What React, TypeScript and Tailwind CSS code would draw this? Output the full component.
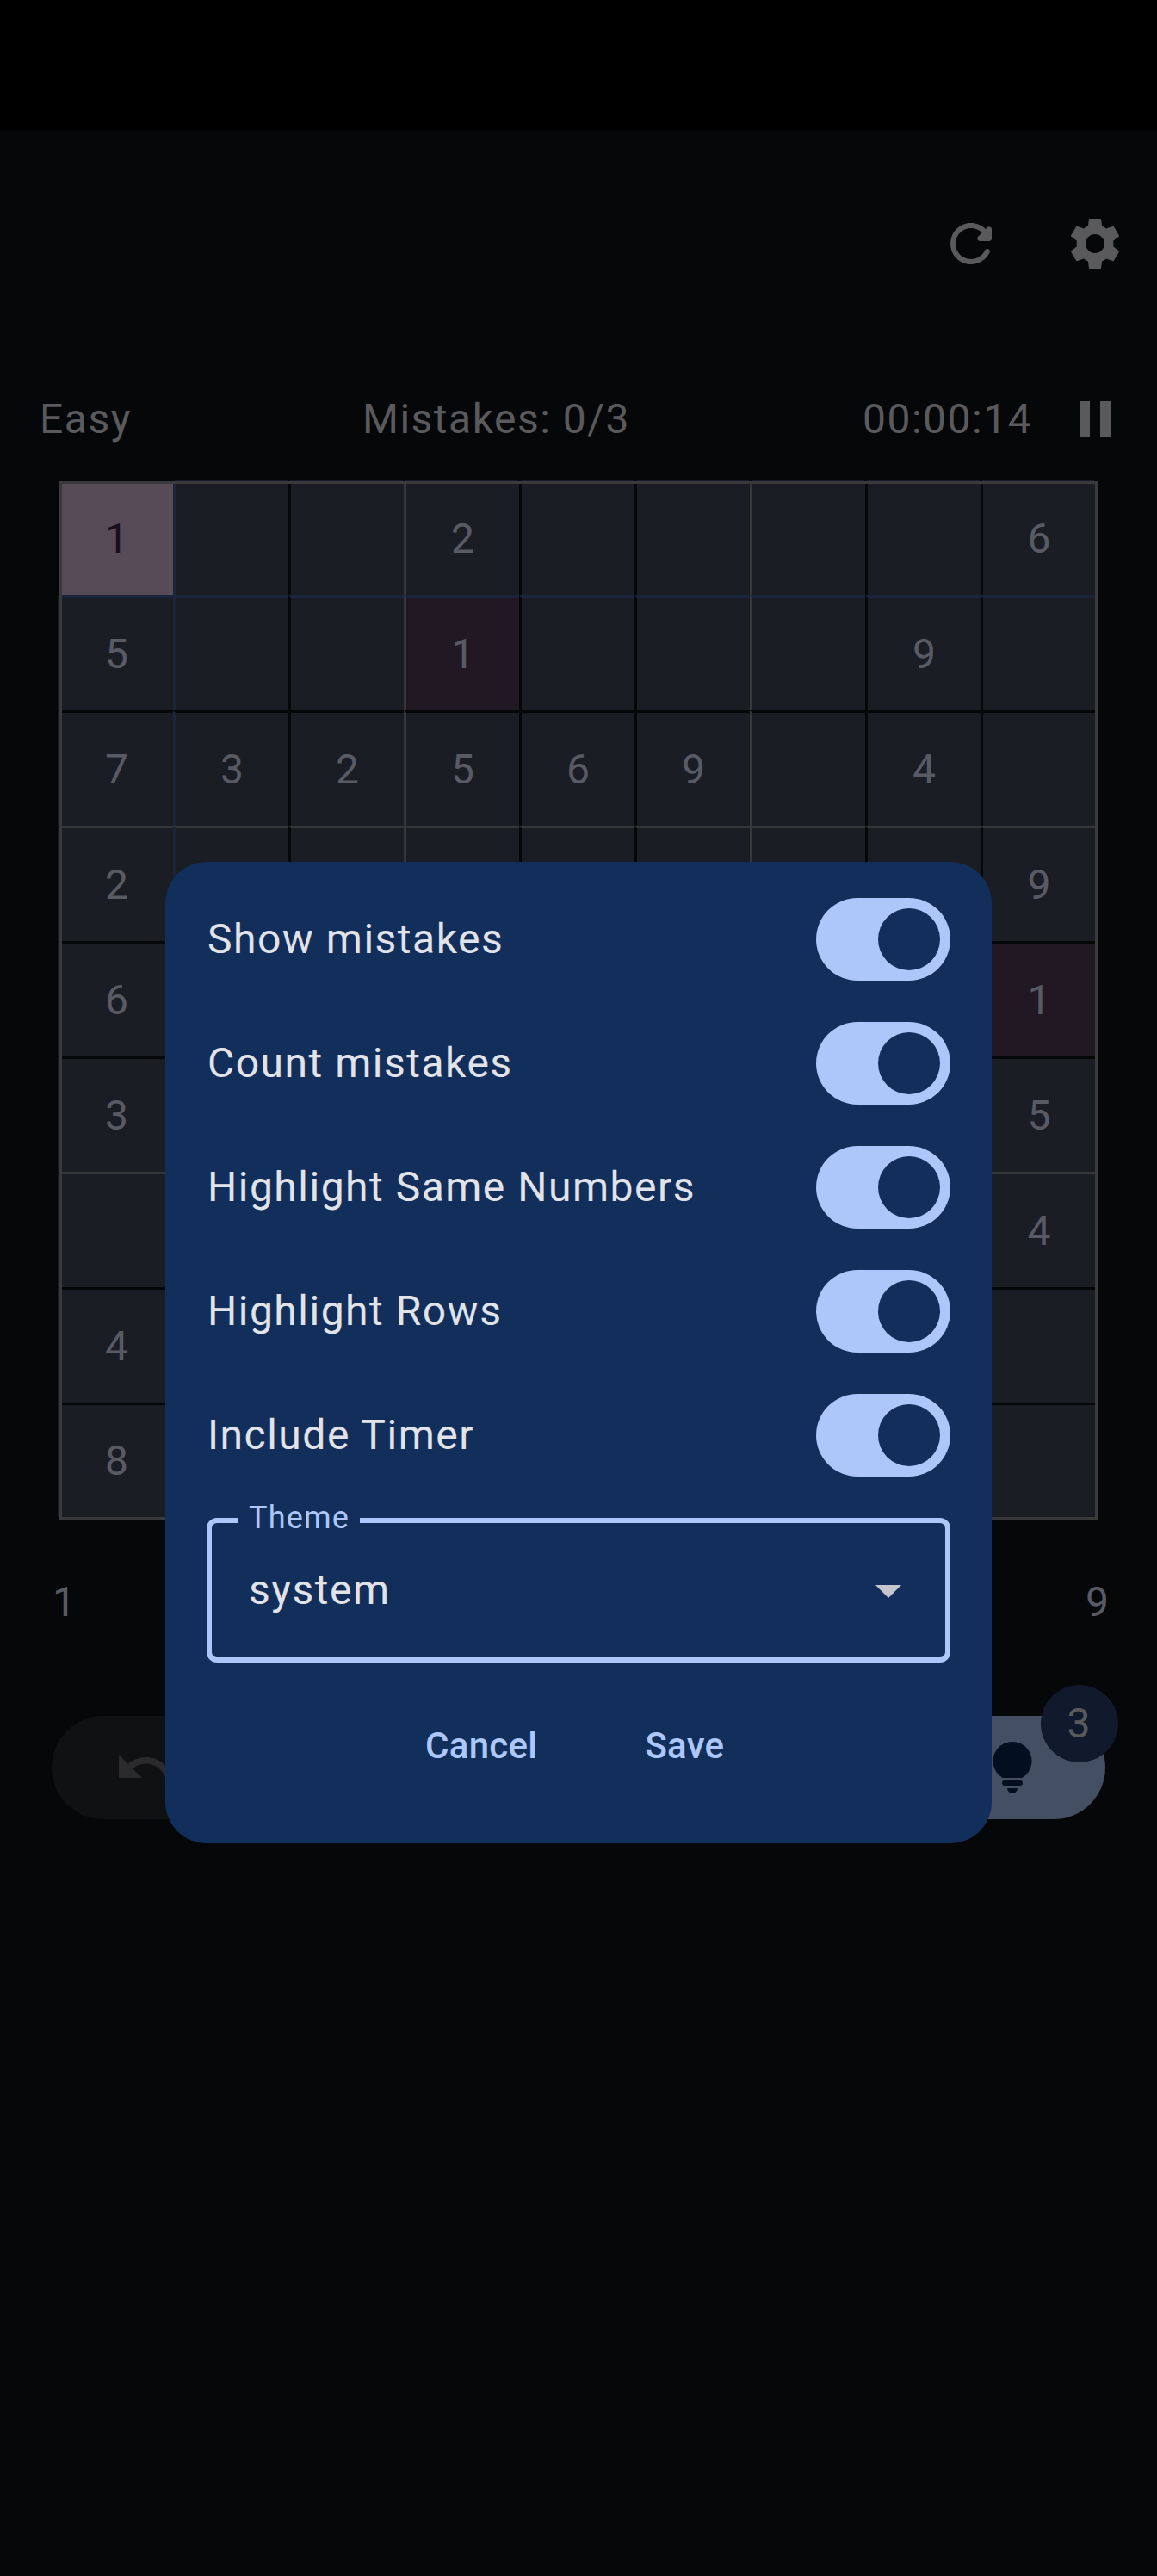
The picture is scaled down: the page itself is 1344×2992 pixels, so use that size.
import React from "react";

const puzzle = [
  "100200006",
  "500100090",
  "732569040",
  "200000009",
  "600000001",
  "300000005",
  "000000004",
  "400000000",
  "800000000",
];

const settings = ["Show mistakes", "Count mistakes", "Highlight Same Numbers", "Highlight Rows", "Include Timer"];

function leftLine(col: number) {
  if (col === 0) return "pr-[2px]";
  if (col % 3 === 0) return "border-l-[3px] border-l-[#37373a]";
  if (col === 1) return "border-l-[3px] border-l-[#1a253b]";
  return "border-l-[3px] border-l-[#060709]";
}

function topLine(row: number) {
  if (row === 0) return "pb-[2px]";
  if (row % 3 === 0) return "border-t-[3px] border-t-[#37373a]";
  if (row === 1) return "border-t-[3px] border-t-[#1a253b]";
  return "border-t-[3px] border-t-[#060709]";
}

function Cell({ row, col, value }: { row: number; col: number; value: string }) {
  const selected = row === 0 && col === 0;
  const same = value === "1" && !selected;
  const fill = selected ? "bg-[#574b58] text-[#19101b]" : same ? "bg-[#211824] text-[#585a64]" : "bg-[#1a1d24] text-[#585a64]";
  return (
    <div className={`relative flex items-center justify-center text-5xl ${fill} ${leftLine(col)} ${topLine(row)}`}>
      {value === "0" ? "" : value}
      {row === 0 && col > 0 && <i className="absolute -top-[5px] right-[1px] -left-[1px] h-[2px] bg-[#151d2e]" />}
      {col === 0 && row > 0 && <i className="absolute -top-[2px] bottom-0 -left-[5px] w-[2px] bg-[#111827]" />}
    </div>
  );
}

function Board() {
  return (
    <div className="mx-[69px] h-[1206px] w-[1206px] border-[3px] border-[#3a3a3c]">
      <div className="grid h-full grid-cols-[129px_repeat(7,134px)_133px] grid-rows-[129px_repeat(7,134px)_133px]">
        {puzzle.map((line, r) => line.split("").map((v, c) => <Cell key={`${r}-${c}`} row={r} col={c} value={v} />))}
      </div>
    </div>
  );
}

function Toggle() {
  return (
    <div className="flex h-24 w-[156px] items-center justify-end rounded-full bg-[#adc7fa] pr-3">
      <div className="size-[72px] rounded-full bg-[#122f5b]" />
    </div>
  );
}

function SettingsDialog() {
  return (
    <div className="absolute top-[1001px] left-48 flex h-[1140px] w-[960px] flex-col rounded-[48px] bg-[#122f5b] px-12 pt-[18px]">
      {settings.map((label) => (
        <div key={label} className="flex h-36 items-center justify-between pl-[1px] text-5xl tracking-[1.5px] text-[#e2e2e9]">
          <span>{label}</span>
          <Toggle />
        </div>
      ))}
      <div className="relative mt-6 flex h-[168px] shrink-0 items-center justify-between rounded-xl border-[6px] border-[#adc7fa] pr-[51px] pl-[43px]">
        <span className="absolute -top-[30px] left-[30px] h-12 w-[142px] bg-[#122f5b] pl-[13px] text-4xl leading-[48px] tracking-[1.2px] text-[#adc7fa]">Theme</span>
        <span className="text-5xl tracking-[1.5px] text-[#e2e2e9]">system</span>
        <svg className="mt-[2px] h-[15px] w-[30px]" viewBox="0 0 30 15" fill="#c5c6cf"><path d="M0 0h30L15 15z" /></svg>
      </div>
      <div className="mt-6 flex h-36 items-center text-[42px] font-medium tracking-[0.3px] text-[#adc7fa]">
        <span className="ml-[254px]">Cancel</span>
        <span className="ml-[125px]">Save</span>
      </div>
    </div>
  );
}

export default function App() {
  return (
    <div className="relative h-[2992px] w-[1344px] overflow-hidden bg-[#060709] font-['Roboto',sans-serif]">
      <div className="h-[151px] bg-black" />
      <header className="flex h-[264px] items-center justify-end text-[#5a5a5c]">
        <svg className="mr-[72px] size-[72px]" viewBox="0 0 24 24" fill="currentColor">
          <path d="M17.65 6.35c-1.63-1.63-3.94-2.57-6.48-2.31-3.67.37-6.69 3.35-7.1 7.02C3.52 15.91 7.27 20 12 20c3.19 0 5.93-1.87 7.21-4.56.32-.67-.16-1.44-.9-1.44-.37 0-.72.2-.88.53-1.13 2.43-3.84 3.97-6.8 3.31-2.22-.49-4.01-2.3-4.48-4.52C5.31 9.44 8.26 6 12 6c1.66 0 3.14.69 4.22 1.78l-1.51 1.51c-.63.63-.19 1.71.7 1.71H19c.55 0 1-.45 1-1V6.41c0-.89-1.08-1.34-1.71-.71l-.64.65z" />
        </svg>
        <svg className="mr-9 size-[72px]" viewBox="-12 -12 24 24" fill="currentColor">
          <path
            fillRule="evenodd"
            d="M-2.2-9.65H2.2L2.35-9.5 2.7-6.8Q3.6-6.45 4.35-5.8L7-6.75 7.25-6.65 9.35-3.1 9.3-2.8 7.05-1.1Q7.2 0 7.05 1.1L9.3 2.8 9.35 3.1 7.25 6.65 7 6.75 4.35 5.8Q3.6 6.45 2.7 6.8L2.35 9.5 2.2 9.65H-2.2L-2.35 9.5-2.7 6.8Q-3.6 6.45-4.35 5.8L-7 6.75-7.25 6.65-9.35 3.1-9.3 2.8-7.05 1.1Q-7.2 0-7.05-1.1L-9.3-2.8-9.35-3.1-7.25-6.65-7-6.75-4.35-5.8Q-3.6-6.45-2.7-6.8L-2.35-9.5zM0-3.65A3.65 3.65 0 1 0 0 3.65 3.65 3.65 0 1 0 0-3.65z"
          />
        </svg>
      </header>
      <div className="flex h-36 items-center text-5xl tracking-[1.5px] text-[#5a5a5c]">
        <span className="ml-[46px] w-[375px]">Easy</span>
        <span className="w-[581px]">Mistakes: 0/3</span>
        <span className="w-[252px]">00:00:14</span>
        <div className="flex h-[42px] gap-3">
          <div className="w-3 bg-[#5a5a5c]" />
          <div className="w-3 bg-[#5a5a5c]" />
        </div>
      </div>
      <Board />
      <div className="flex h-48 items-center justify-between pr-14 pl-[61px] text-5xl text-[#585a64]">
        <span>1</span>
        <span>9</span>
      </div>
      <div className="flex justify-between px-[60px] pt-9">
        <div className="flex h-[120px] w-[204px] items-center rounded-full bg-[#101113] pl-[72px]">
          <svg className="size-[72px]" viewBox="0 0 24 24" fill="#2b2b2d">
            <path d="M12.5 8c-2.65 0-5.05.99-6.9 2.6L2 7v9h9l-3.62-3.62c1.39-1.16 3.16-1.88 5.12-1.88 3.54 0 6.55 2.31 7.6 5.5l2.37-.78C21.08 11.03 17.15 8 12.5 8z" />
          </svg>
        </div>
        <div className="relative flex h-[120px] w-[216px] items-center justify-center rounded-full bg-[#454f63]">
          <svg className="size-[72px]" viewBox="0 0 24 24" fill="#030f20">
            <path d="M8.26 16A7.5 7.5 0 1 1 15.74 16zM9 17h6a1 1 0 0 1 0 2H9a1 1 0 0 1 0-2zM10 20h4a2 2 0 0 1-4 0z" />
          </svg>
          <div className="absolute -top-9 -right-[15px] flex size-[90px] items-center justify-center rounded-full bg-[#111a2c] pr-[2px] text-5xl text-[#5a5a5c]">3</div>
        </div>
      </div>
      <SettingsDialog />
    </div>
  );
}
